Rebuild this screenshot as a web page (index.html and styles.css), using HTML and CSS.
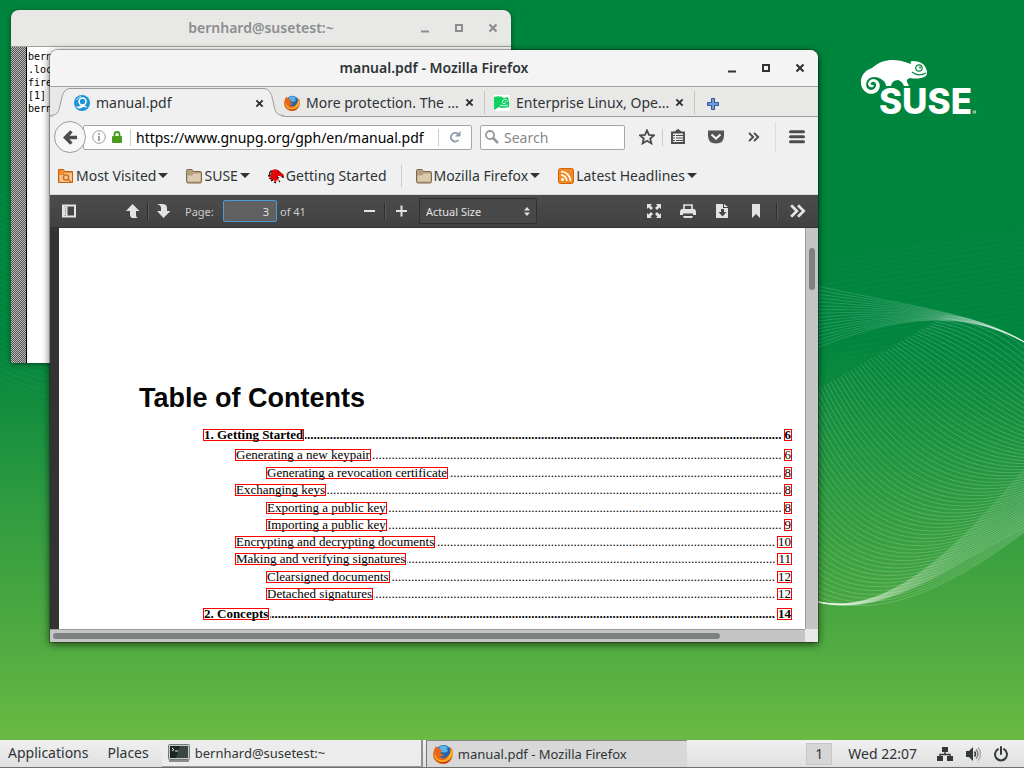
FILE: index.html
```html
<!DOCTYPE html>
<html lang="en">
<head>
<meta charset="utf-8">
<title>Desktop</title>
<link rel="stylesheet" href="styles.css">
</head>
<body>
<svg class="defs" aria-hidden="true">
  <defs>
    <symbol id="close" viewBox="0 0 10 10"><path d="M1.500 1.500l7 7M8.500 1.500l-7 7" stroke="currentColor" stroke-width="2.200" fill="none"/></symbol>
    <symbol id="firefox" viewBox="0 0 20 20">
      <circle cx="10.500" cy="9" r="8" fill="#2a63ad"/>
      <path d="M6 3Q10 0 15 3Q13 4 15 7Q11 10 7 7Z" fill="#55b4e8"/>
      <path d="M3 2Q0 6 0 11A9.800 9.500 0 0 0 19.800 10Q20 5 17 3Q18 8 16 11Q13 15 9 14Q7 13 7 12Q10 13 11.500 11Q8 11 7.500 8L9.500 6.500Q6 5 5.500 4Q4 4 3 2Z" fill="#e8661b"/>
      <path d="M16 11Q14 17 8 16Q3 15 2 9Q1 15 5 18Q10 21 16 17Q20 13 19.500 8Q19 6 18 5Q18 9 16 11Z" fill="#f9b21e"/>
      <path d="M1 12Q4 19 11 18Q17 17 19 12Q17 19.500 10 19.600Q3 19 1 12Z" fill="#c9301c"/>
    </symbol>
    <symbol id="folder" viewBox="0 0 16 16">
      <path d="M.5 2.500q0-1 1-1h4.500l1.500 2h6.500q1.500 0 1.500 1.500v8.500q0 1.500-1.500 1.500h-12q-1.500 0-1.500-1.500z" fill="#b59f7d" stroke="#7d6a4c"/>
      <path d="M1.500 7.500h4.500l1.500-2h7v8h-13z" fill="#dccbae"/>
    </symbol>
    <symbol id="chev" viewBox="0 0 14 12"><path d="M1 1l5 5-5 5M7 1l5 5-5 5" fill="none" stroke="currentColor" stroke-width="2.400"/></symbol>
  </defs>
</svg>

<main class="desktop">
  <svg class="waves" id="waves" viewBox="0 0 1024 740" preserveAspectRatio="none" aria-hidden="true"></svg>

  <svg class="suse-logo" viewBox="0 0 120 60" role="img" aria-label="SUSE">
    <path fill="#fff" d="M1 24C0 15 6 10 12 8C19 2 25 0 33 0C42 0 47 3 51 4Q50 1 52 1Q59 1 63 4Q67 8 67 13Q67 17 61 18Q55 19 50 18Q46 19 47 22L49 26L44 26Q42 21 38 20Q32 20 31 26H26Q26 22 21 19C17 16 9 16 7 21C4 28 10 32 14 29C18 26 16 21 12 22Q9 24 12 25Q15 24 13 27Q9 28 8 24Q9 19 14 19C20 20 22 27 17 32C9 37 2 31 1 24Z"/>
    <circle cx="59" cy="8" r="3.200" fill="none" stroke="#00853e" stroke-width="1.200"/>
    <circle cx="60" cy="7.500" r="1" fill="#00853e"/>
    <path d="M52 12Q58 17 66 13" fill="none" stroke="#00853e" stroke-width="1.200"/>
    <text x="19" y="54" class="logo-text">SUSE</text>
    <circle cx="114.500" cy="52" r="1.300" fill="none" stroke="#fff" stroke-width=".8"/>
  </svg>

  <section class="window terminal" aria-label="Terminal">
    <header class="titlebar inactive">
      <h2 class="title">bernhard@susetest:~</h2>
      <div class="controls">
        <button aria-label="Minimize"><svg viewBox="0 0 10 10"><path d="M1 8.500h8" stroke="currentColor" stroke-width="2"/></svg></button>
        <button aria-label="Maximize"><svg viewBox="0 0 10 10"><path d="M2 2h6v6h-6z" fill="none" stroke="currentColor" stroke-width="2"/></svg></button>
        <button aria-label="Close"><svg viewBox="0 0 10 10"><use href="#close"/></svg></button>
      </div>
    </header>
    <div class="term-body">
      <div class="term-scroll"></div>
      <pre class="term-text">bern
.loc
fire
[1]
bern</pre>
    </div>
  </section>

  <section class="window browser" aria-label="Mozilla Firefox">
    <header class="titlebar">
      <h1 class="title">manual.pdf - Mozilla Firefox</h1>
      <div class="controls">
        <button aria-label="Minimize"><svg viewBox="0 0 10 10"><path d="M1 8.500h8" stroke="currentColor" stroke-width="2"/></svg></button>
        <button aria-label="Maximize"><svg viewBox="0 0 10 10"><path d="M2 2h6v6h-6z" fill="none" stroke="currentColor" stroke-width="2"/></svg></button>
        <button aria-label="Close"><svg viewBox="0 0 10 10"><use href="#close"/></svg></button>
      </div>
    </header>

    <nav class="tabs" aria-label="Tabs">
      <div class="tab active">
        <svg class="tab-edge" viewBox="0 0 20 30"><path d="M0 29.500C9 29.500 9 23 11 14Q13 1.500 20 1.500V30H0Z" fill="#f0f0f0"/><path d="M0 28.500C9 28.500 9 23 11 14Q13 1.500 20 1.500" fill="none" stroke="#9b9c98"/></svg>
        <div class="tab-face">
          <svg class="fav" viewBox="0 0 16 16"><circle cx="8" cy="8" r="8" fill="#1b93d8"/><circle cx="8.500" cy="6.500" r="3.500" fill="none" stroke="#fff" stroke-width="1.600"/><path d="M1 10.500Q4 13 6 10.500Q8 9.500 11 10.500Q13 11.500 13 13Q10 11 7.500 13Q4 15 1 10.500Z" fill="#fff"/><path d="M2.500 5Q4 2 7 1.500" stroke="#bfe3f7" fill="none"/></svg>
          <button class="tab-label">manual.pdf</button>
          <button class="tab-close" aria-label="Close tab"><svg viewBox="0 0 10 10"><use href="#close"/></svg></button>
        </div>
        <svg class="tab-edge" viewBox="0 0 20 30"><path d="M20 29.500C11 29.500 11 23 9 14Q7 1.500 0 1.500V30H20Z" fill="#f0f0f0"/><path d="M20 28.500C11 28.500 11 23 9 14Q7 1.500 0 1.500" fill="none" stroke="#9b9c98"/></svg>
      </div>
      <div class="tab">
        <svg class="fav"><use href="#firefox"/></svg>
        <button class="tab-label">More protection. The ...</button>
        <button class="tab-close" aria-label="Close tab"><svg viewBox="0 0 10 10"><use href="#close"/></svg></button>
      </div>
      <div class="tab">
        <svg class="fav" viewBox="0 0 16 16"><path d="M0 0h16v16H0z" fill="#fff"/><path d="M0 2Q6 0 10 3L14 2Q16 7 15 12Q8 14 5 12L0 15Z" fill="#12cf63"/><path d="M14 7Q13 3 9 5Q7 8 10 9Q13 8 11 6.500M6 10Q10 12 14 10" fill="none" stroke="#c5ffdd"/></svg>
        <button class="tab-label">Enterprise Linux, Ope...</button>
        <button class="tab-close" aria-label="Close tab"><svg viewBox="0 0 10 10"><use href="#close"/></svg></button>
      </div>
      <button class="new-tab" aria-label="New tab"><svg viewBox="0 0 12 12"><path d="M4.500.5h3v4h4v3h-4v4h-3v-4h-4v-3h4z" fill="#6f9cd4" stroke="#2a5694"/></svg></button>
    </nav>

    <div class="navbar">
      <button class="back" aria-label="Back"><svg viewBox="0 0 16 16"><path d="M9 1.500L2.500 8L9 14.500M3 8h12" fill="none" stroke="#4c4c4c" stroke-width="3.600"/></svg></button>
      <div class="url">
        <svg class="i14" viewBox="0 0 14 14"><circle cx="7" cy="7" r="6.300" fill="none" stroke="#999"/><path d="M7 6v5M7 3v1.800" stroke="#888" stroke-width="1.600"/></svg>
        <svg class="lock" viewBox="0 0 10 12"><path d="M2.500 6V3.500a2.500 2.500 0 0 1 5 0V6" fill="none" stroke="#4a9a1e" stroke-width="1.800"/><rect y="5" width="10" height="7" rx="1" fill="#4a9a1e"/></svg>
        <span class="vsep"></span>
        <input class="url-input" type="text" aria-label="Address" value="https://www.gnupg.org/gph/en/manual.pdf">
        <span class="vsep"></span>
        <button class="reload" aria-label="Reload"><svg viewBox="0 0 12 12"><path d="M9.500 9A4.300 4.300 0 1 1 9 3" fill="none" stroke="#8b9bb0" stroke-width="1.800"/><path d="M11.500 0v5.500h-5.500z" fill="#8b9bb0"/></svg></button>
      </div>
      <div class="search">
        <svg class="i14" viewBox="0 0 14 14"><circle cx="5" cy="5" r="4" fill="none" stroke="#999" stroke-width="1.800"/><path d="M8 8l5 5" stroke="#999" stroke-width="2.600"/></svg>
        <input type="text" aria-label="Search" placeholder="Search">
      </div>
      <div class="tools">
        <button aria-label="Bookmark this page"><svg viewBox="0 0 16 16"><path d="M8 1.300l2 4.600 5 .4-3.800 3.200 1.200 4.900L8 11.800l-4.400 2.600 1.200-4.900L1 6.300l5-.4z" fill="none" stroke="#4c4c4c" stroke-width="1.800"/></svg></button>
        <span class="vsep"></span>
        <button aria-label="Bookmarks"><svg viewBox="0 0 16 16"><path d="M2 3.500h12v10.500h-12zM5 3.500L8 1l3 2.500" fill="none" stroke="#4c4c4c" stroke-width="1.900"/><path d="M3 6.500h2m1 0h7M3 9h2m1 0h7M3 11.500h2m1 0h7" stroke="#4c4c4c" stroke-width="1.200"/></svg></button>
        <button aria-label="Pocket"><svg viewBox="0 0 16 16"><path d="M0 1.500h16v5q0 8-8 8t-8-8z" fill="#555"/><path d="M3.500 5.500L8 9.500l4.500-4" fill="none" stroke="#f0f0f0" stroke-width="2.200"/></svg></button>
        <button aria-label="More tools"><svg class="small-chev" viewBox="0 0 14 12"><use href="#chev"/></svg></button>
        <span class="vsep tall"></span>
        <button aria-label="Menu"><svg viewBox="0 0 16 16"><path d="M1.500 2.700h13M1.500 7.700h13M1.500 12.700h13" stroke="#4c4c4c" stroke-width="3" stroke-linecap="round"/></svg></button>
      </div>
    </div>

    <nav class="bookmarks" aria-label="Bookmarks toolbar">
      <button><svg viewBox="0 0 16 16"><path d="M.5 1.500h5l1.500 2h7.500v11h-14z" fill="#ef8b33" stroke="#c65d0b"/><path d="M1.500 7h4l1.500-2h7v9h-12.500z" fill="#f4c38f"/><circle cx="8" cy="9.500" r="2.600" fill="none" stroke="#d06a15" stroke-width="1.300"/><path d="M10 11.500l3 2.500" stroke="#d06a15" stroke-width="1.500"/></svg>Most Visited<i class="caret"></i></button>
      <button><svg><use href="#folder"/></svg>SUSE<i class="caret"></i></button>
      <a href="#start"><svg viewBox="0 0 16 16"><path d="M3 3Q6 0 10 2L16 7L15 10L12 8H10L10 11L12 13L9 12L7 15L6 12L3 13L3 10L0 8L3 7Z" fill="#e00808"/><path d="M3.500 2.500Q1 4 2 7L0 8M1 10l2 1M3 13l2-1M6 14l2 1M11 13l1 1M9 9l2 1M10 4h1M15 10v-2" stroke="#111" stroke-width="1.300" fill="none"/></svg>Getting Started</a>
      <span class="vsep"></span>
      <button><svg><use href="#folder"/></svg>Mozilla Firefox<i class="caret"></i></button>
      <button><svg viewBox="0 0 16 16"><rect x=".5" y=".5" width="15" height="15" rx="2" fill="#f28a24" stroke="#cf6310"/><circle cx="4.500" cy="11.500" r="1.500" fill="#fff"/><path d="M3 7.200a5.800 5.800 0 0 1 5.800 5.800M3 3.500a9.500 9.500 0 0 1 9.500 9.500" fill="none" stroke="#fff" stroke-width="1.700"/></svg>Latest Headlines<i class="caret"></i></button>
    </nav>

    <div class="pdfbar">
      <button aria-label="Toggle sidebar"><svg viewBox="0 0 16 16"><path d="M2 2.500h12v11h-12z" fill="none" stroke="currentColor" stroke-width="2"/><path d="M3.500 4h2v8h-2zM6 3v10" fill="#aaa" stroke="currentColor"/></svg></button>
      <div class="pager">
        <button aria-label="Previous page"><svg viewBox="0 0 16 16"><path d="M7.500 1L14.500 8H11V12Q11 14 12.500 15H7Q5 14 5 12V8H1Z" fill="currentColor"/></svg></button>
        <span class="dsep"></span>
        <button aria-label="Next page"><svg viewBox="0 0 16 16"><path d="M8.500 15L15.500 8H12V5Q12 1 7 1H2Q6 2 6 5V8H2Z" fill="currentColor"/></svg></button>
      </div>
      <label class="page-label" for="page">Page:</label>
      <input class="page-input" id="page" type="text" value="3">
      <span class="page-total">of 41</span>
      <div class="zoom">
        <button aria-label="Zoom out"><svg viewBox="0 0 16 16"><path d="M3 8h11" stroke="currentColor" stroke-width="2"/></svg></button>
        <span class="dsep"></span>
        <button aria-label="Zoom in"><svg viewBox="0 0 16 16"><path d="M3 8h11M8.500 2.500v11" stroke="currentColor" stroke-width="2"/></svg></button>
        <div class="select-wrap">
          <select aria-label="Zoom"><option>Actual Size</option></select>
          <svg class="updown" viewBox="0 0 6 9"><path d="M3 0l3 3.500H0zM3 9l3-3.500H0z" fill="#ddd"/></svg>
        </div>
      </div>
      <div class="pdf-tools">
        <button aria-label="Presentation mode"><svg viewBox="0 0 16 16"><path d="M1 1h5L4.500 2.500 7 5 5 7 2.500 4.500 1 6zM15 1h-5l1.500 1.500L9 5l2 2 2.500-2.500L15 6zM1 15h5l-1.500-1.500L7 11 5 9l-2.500 2.500L1 10zM15 15h-5l1.500-1.500L9 11l2-2 2.500 2.500L15 10z" fill="currentColor"/></svg></button>
        <button aria-label="Print"><svg viewBox="0 0 16 16"><path d="M4 6V2h8v4" fill="none" stroke="currentColor" stroke-width="1.700"/><path d="M1.500 6h13q1.500 1 1.500 3v3h-3v-1.500H3V12H0V9q0-2 1.500-3zM3 13h10l-1 2H4z" fill="currentColor"/></svg></button>
        <button aria-label="Download"><svg viewBox="0 0 16 16"><path d="M2 1h7v4h5v10H2zM10 1l4 3h-4z" fill="currentColor"/><path d="M7 6h3v3h2.500l-4 4.500-4-4.500H7z" fill="#474747"/></svg></button>
        <button aria-label="Current view"><svg viewBox="0 0 16 16"><path d="M4 1h8v14l-4-4-4 4z" fill="currentColor"/></svg></button>
        <span class="dsep"></span>
        <button aria-label="Tools"><svg viewBox="0 0 14 12"><use href="#chev"/></svg></button>
      </div>
    </div>

    <div class="viewer">
      <article class="page">
        <h2 class="toc-title">Table of Contents</h2>
        <ol class="toc">
          <li class="chapter"><div class="row"><a href="#p6">1. Getting Started</a><span class="dots"></span><a href="#p6">6</a></div>
            <ol>
              <li><div class="row"><a href="#p6">Generating a new keypair</a><span class="dots"></span><a href="#p6">6</a></div>
                <ol><li><div class="row"><a href="#p8">Generating a revocation certificate</a><span class="dots"></span><a href="#p8">8</a></div></li></ol></li>
              <li><div class="row"><a href="#p8">Exchanging keys</a><span class="dots"></span><a href="#p8">8</a></div>
                <ol><li><div class="row"><a href="#p8">Exporting a public key</a><span class="dots"></span><a href="#p8">8</a></div></li>
                <li><div class="row"><a href="#p9">Importing a public key</a><span class="dots"></span><a href="#p9">9</a></div></li></ol></li>
              <li><div class="row"><a href="#p10">Encrypting and decrypting documents</a><span class="dots"></span><a href="#p10">10</a></div></li>
              <li><div class="row"><a href="#p11">Making and verifying signatures</a><span class="dots"></span><a href="#p11">11</a></div>
                <ol><li><div class="row"><a href="#p12">Clearsigned documents</a><span class="dots"></span><a href="#p12">12</a></div></li>
                <li><div class="row"><a href="#p12">Detached signatures</a><span class="dots"></span><a href="#p12">12</a></div></li></ol></li>
            </ol></li>
          <li class="chapter"><div class="row"><a href="#p14">2. Concepts</a><span class="dots"></span><a href="#p14">14</a></div></li>
        </ol>
      </article>
      <div class="vscroll"><span></span></div>
      <div class="hscroll"><span></span></div>
      <div class="corner"></div>
    </div>
  </section>
</main>

<footer class="panel">
  <button class="menu">Applications</button>
  <button class="menu">Places</button>
  <button class="task"><svg viewBox="0 0 22 18"><rect x=".5" y=".5" width="21" height="15" rx="1" fill="#c9c9c7" stroke="#77797a"/><rect x="2" y="2" width="18" height="12" fill="#1c2424"/><path d="M12 2h8v12h-12z" fill="#3b4644"/><path d="M4 4l2 1.500L4 7M7 7h3" stroke="#eee" fill="none"/><path d="M1 17h20" stroke="#8a8c8b" stroke-width="2"/></svg><span>bernhard@susetest:~</span></button>
  <button class="task current"><svg class="ff"><use href="#firefox"/></svg><span>manual.pdf - Mozilla Firefox</span></button>
  <div class="tray">
    <button class="workspace">1</button>
    <time class="clock">Wed 22:07</time>
    <button aria-label="Network"><svg viewBox="0 0 16 16"><path d="M5 1h6v5H5zM0 10h6v5H0zM10 10h6v5h-6z" fill="#33393b"/><path d="M8 6v2.500M3 10V8.500h10V10" stroke="#33393b" stroke-width="1.400" fill="none"/></svg></button>
    <button aria-label="Volume"><svg viewBox="0 0 16 16"><path d="M1 5h3l4-4v14l-4-4H1z" fill="#33393b"/><path d="M9.500 5.500q2 2.500 0 5" fill="none" stroke="#33393b" stroke-width="1.500"/><path d="M11 3.500q4 4.500 0 9" fill="none" stroke="#777" stroke-width="1.300"/><path d="M13 1.500q5 6.500 0 13" fill="none" stroke="#aaa" stroke-width="1.300"/></svg></button>
    <button aria-label="Power"><svg viewBox="0 0 16 16"><path d="M5 3.200a6 6 0 1 0 6 0M8 1v7" fill="none" stroke="#33393b" stroke-width="2" stroke-linecap="round"/></svg></button>
  </div>
</footer>
<script src="waves.js"></script>
</body>
</html>
```
FILE: styles.css
```css
* { box-sizing: border-box; }
html, body { height: 100%; margin: 0; }
body {
  display: flex;
  flex-direction: column;
  overflow: hidden;
  font-family: "Noto Sans", "Open Sans", sans-serif;
  font-size: 14px;
  color: #2e3436;
}
button, input, select { font: inherit; color: inherit; }
button { border: 0; padding: 0; background: none; }
h1, h2, ol, pre { margin: 0; padding: 0; }
ol { list-style: none; }
svg { display: block; flex: none; }
.defs { position: absolute; width: 0; height: 0; }

.desktop {
  position: relative;
  flex: 1;
  min-height: 0;
  overflow: hidden;
  background: linear-gradient(#00853e 0, #00853e 46%, #2f9b40 68%, #4faa41 86%, #6aba42 100%);
}
.waves { position: absolute; inset: 0; width: 100%; height: 100%; }
.suse-logo { position: absolute; right: 44px; top: 60px; width: 120px; height: 60px; overflow: visible; }
.logo-text { font: 800 35px Inter, sans-serif; fill: #fff; }

/* windows */
.window { position: absolute; display: flex; flex-direction: column; border-radius: 8px 8px 0 0; overflow: hidden; }
.terminal { left: 11px; top: 10px; width: 500px; height: 353px; box-shadow: 0 1px 5px rgba(0,0,0,.5); }
.browser {
  left: 50px; top: 50px; bottom: 98px; width: 75%;
  background: #f0f0f0;
  box-shadow: 0 0 0 1px rgba(0,0,0,.25), 0 2px 8px rgba(0,0,0,.65);
}
.titlebar {
  display: flex; align-items: center; flex: none;
  height: 37px; padding: 0 13px;
  background: #f4f4f4; border-bottom: 1px solid #a0a19c;
}
.titlebar.inactive { background: #e8e8e7; color: #8b8e8f; }
.title { flex: 1; padding-left: 78px; text-align: center; font-size: 14px; font-weight: 600; line-height: 20px; }
.controls { display: flex; gap: 24px; }
.controls svg { width: 10px; height: 10px; }
.term-body { flex: 1; display: flex; background: #fff; }
.term-scroll { width: 16px; border-right: 1px solid #000; background: repeating-conic-gradient(#555 0 25%, #b8b8b8 0 50%) 0 0 / 2px 2px; }
.term-text { padding: 3px 1px; font: 10px/13px "DejaVu Sans Mono", monospace; color: #000; }

/* tabs */
.tabs { display: flex; flex: none; height: 30px; background: #e8e8e7; border-bottom: 1px solid #9b9c98; }
.tab { display: flex; align-items: center; width: 210px; padding: 0 10px 0 9px; gap: 6px; margin: 4px 0 2px; border-right: 1px solid #c4c4c2; }
.tab.active { width: 234px; height: 30px; margin: 0 -9px 0 0; padding: 0; gap: 0; border: 0; }
.tab-edge { width: 20px; height: 30px; }
.tab-face { flex: 1; align-self: flex-start; height: 29px; display: flex; align-items: center; gap: 6px; margin: 1px -1px 0; padding: 0 1px 0 5px; background: #f0f0f0; border-top: 1px solid #9b9c98; }
.fav { width: 16px; height: 16px; }
.tab-label { flex: 1; min-width: 0; text-align: left; white-space: nowrap; line-height: 20px; }
.tab-close svg { width: 9px; height: 9px; }
.new-tab { padding: 4px 12px 0; }
.new-tab svg { width: 12px; height: 12px; }

/* navigation */
.navbar { display: flex; align-items: center; flex: none; height: 40px; padding: 0 13px 0 4px; }
.back { display: grid; place-items: center; width: 32px; height: 32px; margin-right: -3px; border: 1px solid #9b9c98; border-radius: 50%; background: #f6f6f6; z-index: 1; }
.back svg { width: 15px; height: 15px; }
.url, .search { display: flex; align-items: center; height: 25px; background: #fff; border: 1px solid #a6a7a3; border-radius: 2px; }
.url { flex: 1; padding-left: 8px; min-width: 0; }
.i14 { width: 14px; height: 14px; }
.lock { width: 10px; height: 12px; margin: 0 8px 0 6px; }
.vsep { flex: none; width: 1px; height: 17px; background: #ccc; }
.url-input { flex: 1; min-width: 0; border: 0; padding: 0 0 0 5px; background: none; color: #000; }
.reload { padding: 0 10px; }
.reload svg { width: 12px; height: 12px; }
.search { width: 145px; margin-left: 8px; padding-left: 4px; }
.search input { flex: 1; min-width: 0; border: 0; padding: 0 0 0 5px; background: none; }
.search input::placeholder { color: #85888a; opacity: 1; }
.tools { display: flex; align-items: center; }
.tools svg { width: 16px; height: 16px; }
.tools button { padding: 0 11px; }
.tools button:first-child { padding: 0 7px 0 14px; }
.tools .vsep + button { padding-left: 7px; }
.tools .small-chev { width: 16px; height: 10px; color: #4c4c4c; }
.tools .vsep.tall { height: 30px; background: #ddd; margin-left: 2px; }
.tools .vsep.tall + button { padding: 0 0 0 13px; }

.bookmarks { display: flex; align-items: center; flex: none; height: 38px; padding: 0 8px; gap: 18px; border-bottom: 1px solid #d8d8d8; }
.bookmarks button, .bookmarks a { display: flex; align-items: center; gap: 2px; line-height: 20px; color: inherit; text-decoration: none; white-space: nowrap; }
.bookmarks svg { width: 16px; height: 16px; }
.bookmarks .vsep { height: 22px; margin: 0 -4px; }
.caret { border: 5px solid transparent; border-top-color: #2e3436; border-bottom: 0; }

/* pdf toolbar */
.pdfbar { display: flex; align-items: center; flex: none; height: 33px; padding: 0 12px 0 11px; background: linear-gradient(#4c4c4c, #414141); border-bottom: 1px solid #333; color: #e3e3e3; font-size: 11px; }
.pdfbar svg { width: 16px; height: 16px; }
.pager { display: flex; align-items: center; gap: 6px; margin: 0 14px 0 48px; }
.dsep { width: 2px; height: 17px; background: #2c2c2c; border-right: 1px solid #5c5c5c; }
.page-label, .page-total { color: #ccc; }
.page-label { width: 38px; }
.page-input { width: 54px; height: 22px; padding: 0 7px; text-align: right; border: 1px solid #4c9bd6; border-radius: 2px; background: #606060; }
.page-total { padding-left: 3px; width: 40px; }
.zoom { display: flex; align-items: center; gap: 7px; margin-left: 44px; }
.select-wrap { display: grid; align-items: center; margin-left: 3px; }
.select-wrap > * { grid-area: 1 / 1; }
.select-wrap select { appearance: none; width: 118px; height: 26px; padding: 0 6px; background: #484848; border: 1px solid #303030; border-radius: 2px; }
.pdfbar .updown { width: 6px; height: 9px; justify-self: end; margin-right: 7px; pointer-events: none; }
.pdf-tools { display: flex; align-items: center; gap: 18px; margin-left: auto; }
.pdf-tools .dsep { margin: 0 -6px; }

/* document */
.viewer { flex: 1; min-height: 0; display: grid; grid-template: 1fr 13px / 1fr 13px; padding-left: 9px; background: #333; }
.page { overflow: hidden; padding: 151px 13px 0 80px; background: #fff; color: #000; }
.toc-title { font: 700 27px/38px "Liberation Sans", Arial, sans-serif; color: #060606; }
.toc { padding: 9px 0 0 64px; font: 13px/17px "Liberation Serif", "Times New Roman", serif; }
.row { display: flex; align-items: center; height: 17px; }
.toc a { flex: none; height: 12px; line-height: 10px; border: 1px solid #f00; color: #000; text-decoration: none; white-space: nowrap; }
.dots { flex: 1; overflow: hidden; direction: rtl; white-space: nowrap; margin: 0 2px 0 1px; }
.dots::before { content: "............................................................................................................................................................................................"; }
.chapter > .row { font-weight: 700; }
.chapter > ol { padding: 3px 0 3px 32px; }
.chapter > ol ol { padding: 1px 0 0 31px; }
.vscroll { background: #c4c5c4; border-left: 1px solid #9b9c98; padding: 20px 3px; }
.vscroll span { display: block; height: 42px; border-radius: 3px; background: #7d8182; }
.hscroll { margin-left: -9px; background: #c4c5c4; border-top: 1px solid #9b9c98; padding: 3px; }
.hscroll span { display: block; width: 89%; height: 6px; border-radius: 3px; background: #7d8182; }
.corner { background: #e8e8e7; }

/* bottom panel */
.panel { display: flex; align-items: stretch; flex: none; height: 28px; padding: 0 15px 0 8px; background: linear-gradient(#f0f0f0, #e0e0e0); border-bottom: 1px solid #6e6e6e; }
.menu { margin-right: 19px; padding-bottom: 2px; line-height: 20px; }
.menu + .task { margin-left: -6px; }
.task { display: flex; align-items: center; gap: 5px; width: 261px; padding: 0 6px; margin-right: 3px; font-size: 13px; background: #ececec; border-right: 2px solid #909090; border-bottom: 1px solid #999; }
.task.current { background: #d8d8d8; border: 0; border-left: 1px solid #777; border-top: 1px solid #888; }
.task svg { width: 22px; height: 18px; }
.task .ff { width: 20px; height: 20px; }
.tray { display: flex; align-items: center; margin-left: auto; gap: 12px; }
.tray svg { width: 16px; height: 16px; }
.workspace { width: 26px; height: 22px; margin-right: 2px; background: #d6d6d6; border: 1px solid #c6c6c6; }
.clock { margin: 0 8px 0 2px; line-height: 20px; }
```
FILE: waves.js
```js
(function () {
  var svg = document.getElementById("waves");
  function family(a, b, count, opacity) {
    for (var i = 0; i <= count; i++) {
      var t = i / count;
      var p = a.map(function (v, k) { return Math.round((v + (b[k] - v) * t) * 10) / 10; });
      var path = document.createElementNS("http://www.w3.org/2000/svg", "path");
      path.setAttribute("d", "M" + p[0] + " " + p[1] + "C" + p.slice(2).join(" "));
      path.setAttribute("fill", "none");
      path.setAttribute("stroke", "#fff");
      path.setAttribute("stroke-width", "0.8");
      path.setAttribute("stroke-opacity", opacity);
      svg.appendChild(path);
    }
  }
  /* large sheet */
  family([730, 440, 765, 610, 850, 670, 1040, 520], [945, 316, 1010, 318, 1050, 370, 1090, 420], 64, 0.24);
  /* upper and lower folds */
  family([780, 277, 900, 308, 980, 308, 1040, 352], [780, 364, 890, 312, 970, 304, 1040, 352], 16, 0.2);
  family([800, 596, 880, 630, 950, 562, 1040, 520], [800, 596, 880, 630, 960, 548, 1040, 450], 20, 0.2);
  /* faint rays */
  family([780, 270, 860, 256, 940, 242, 1030, 230], [780, 370, 860, 356, 940, 342, 1030, 332], 18, 0.04);
  family([0, 190, 20, 200, 40, 205, 60, 207], [0, 380, 20, 390, 40, 395, 60, 400], 34, 0.06);
})();
```
